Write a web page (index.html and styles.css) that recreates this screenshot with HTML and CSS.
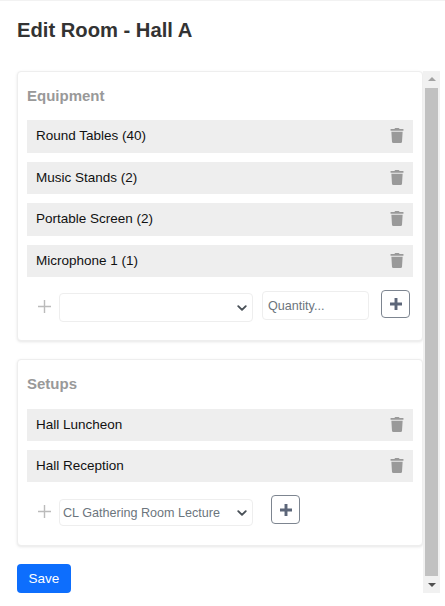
FILE: index.html
```html
<!DOCTYPE html>
<html lang="en">
<head>
  <meta charset="UTF-8">
  <meta name="viewport" content="width=device-width, initial-scale=1.0">
  <title>Edit Room - Hall A</title>
  <link rel="stylesheet" href="styles.css">
</head>
<body>
  <svg class="icon-defs" width="0" height="0">
    <symbol id="trash" viewBox="0 0 448 512">
      <path d="M432 32H312l-9.4-18.7A24 24 0 0 0 281.100 0H166.800a23.700 23.700 0 0 0-21.400 13.300L136 32H16A16 16 0 0 0 0 48v32a16 16 0 0 0 16 16h416a16 16 0 0 0 16-16V48a16 16 0 0 0-16-16zM53.200 467a48 48 0 0 0 47.900 45h245.800a48 48 0 0 0 47.900-45L416 128H32z"/>
    </symbol>
    <symbol id="plus" viewBox="0 0 14 14">
      <path d="M5.300 0h3.400v5.300H14v3.400H8.700V14H5.300V8.700H0V5.300h5.300z"/>
    </symbol>
    <symbol id="plus-thin" viewBox="0 0 13 13">
      <path d="M5.800 0h1.400v5.800H13v1.400H7.200V13H5.800V7.200H0V5.800h5.800z"/>
    </symbol>
  </svg>

  <div class="page">
    <h1>Edit Room - Hall A</h1>

    <div class="scroller">
      <div class="content">
        <section class="card">
          <h2>Equipment</h2>
          <ul class="items">
            <li><span>Round Tables (40)</span><svg class="trash"><use href="#trash"/></svg></li>
            <li><span>Music Stands (2)</span><svg class="trash"><use href="#trash"/></svg></li>
            <li><span>Portable Screen (2)</span><svg class="trash"><use href="#trash"/></svg></li>
            <li><span>Microphone 1 (1)</span><svg class="trash"><use href="#trash"/></svg></li>
          </ul>
          <form class="add-row">
            <svg class="add-mark"><use href="#plus-thin"/></svg>
            <select class="picker">
              <option></option>
            </select>
            <input class="qty" type="text" placeholder="Quantity...">
            <button class="add-btn" type="button"><svg class="plus"><use href="#plus"/></svg></button>
          </form>
        </section>

        <section class="card card-setups">
          <h2>Setups</h2>
          <ul class="items">
            <li><span>Hall Luncheon</span><svg class="trash"><use href="#trash"/></svg></li>
            <li><span>Hall Reception</span><svg class="trash"><use href="#trash"/></svg></li>
          </ul>
          <form class="add-row add-row-setup">
            <svg class="add-mark"><use href="#plus-thin"/></svg>
            <select class="picker">
              <option>CL Gathering Room Lecture</option>
            </select>
            <button class="add-btn" type="button"><svg class="plus"><use href="#plus"/></svg></button>
          </form>
        </section>

        <button class="save" type="button">Save</button>
      </div>

      <div class="scrollbar">
        <span class="arrow arrow-up"></span>
        <span class="thumb"></span>
        <span class="arrow arrow-down"></span>
      </div>
    </div>
  </div>
</body>
</html>
```
FILE: styles.css
```css
* {
  box-sizing: border-box;
}

body {
  font-family: "Liberation Sans", Arial, sans-serif;
  font-size: 13.500px;
  color: #212529;
  background: white;
  margin: 0;
  padding: 0;
}

.icon-defs {
  display: block;
  height: 0;
}

.page {
  border-top: 1px solid #f2f2f2;
  padding: 0 5px 0 17px;
}

h1 {
  font-size: 20.200px;
  font-weight: bold;
  line-height: 24px;
  color: #333;
  margin: 17px 0 29px;
}

.scroller {
  display: flex;
  height: 522px;
}

.content {
  flex: 1;
  min-width: 0;
}

.card {
  background: white;
  border: 1px solid #eee;
  border-radius: 4px;
  box-shadow: 0 1px 3px rgba(0, 0, 0, 0.1);
  padding: 0 9px;
  height: 270px;
}

.card-setups {
  margin-top: 18px;
  height: 187px;
}

h2 {
  font-size: 15px;
  font-weight: bold;
  line-height: 20px;
  color: #999;
  margin: 14px 0 14px;
}

.card-setups h2 {
  margin-bottom: 15px;
}

.items {
  list-style: none;
  margin: 0;
  padding: 0;
}

.items li {
  display: flex;
  align-items: center;
  justify-content: space-between;
  height: 32.500px;
  margin-bottom: 9px;
  padding: 0 9px 1px;
  background: #eee;
  color: #111;
}

.card-setups .items li {
  height: 32px;
}

.trash {
  width: 14px;
  height: 15px;
  fill: #999;
}

.add-row {
  display: flex;
  align-items: flex-start;
  margin-top: 13px;
  padding-left: 11px;
}

.add-mark {
  flex: none;
  width: 13px;
  height: 13px;
  margin: 10px 8px 0 0;
  fill: #bbb;
}

.picker {
  appearance: none;
  width: 194px;
  height: 29px;
  margin-top: 3px;
  padding: 0 3px;
  font-family: inherit;
  font-size: 12.600px;
  color: #6c757d;
  background: white url("data:image/svg+xml,%3Csvg xmlns='http://www.w3.org/2000/svg' viewBox='0 0 16 16'%3E%3Cpath fill='none' stroke='%23495057' stroke-width='3' stroke-linecap='round' stroke-linejoin='round' d='M2 5l6 6 6-6'/%3E%3C/svg%3E") no-repeat right 5px center / 10px 10px;
  border: 1px solid #eee;
  border-radius: 4px;
}

.add-row-setup .picker {
  height: 27px;
  margin-top: 4px;
}

.qty {
  width: 107px;
  height: 29px;
  margin: 1px 0 0 9px;
  padding: 0 5px;
  font-family: inherit;
  font-size: 12.600px;
  border: 1px solid #eee;
  border-radius: 4px;
}

.qty::placeholder {
  color: #6c757d;
}

.add-btn {
  display: flex;
  align-items: center;
  justify-content: center;
  width: 29px;
  height: 28px;
  margin-left: 12px;
  padding: 0;
  background: white;
  border: 1px solid #7d8590;
  border-radius: 4px;
}

.add-row-setup .add-btn {
  height: 29px;
  margin-left: 18px;
}

.plus {
  width: 12px;
  height: 12px;
  fill: #5c6679;
}

.save {
  display: block;
  width: 54px;
  height: 29px;
  margin-top: 18px;
  padding: 0;
  font-family: inherit;
  font-size: 13.500px;
  color: white;
  background: #0d6efd;
  border: none;
  border-radius: 4px;
}

.scrollbar {
  display: flex;
  flex-direction: column;
  align-items: center;
  flex: none;
  width: 17px;
  background: #f1f1f1;
}

.thumb {
  flex: 1;
  width: 13px;
  background: #c1c1c1;
}

.arrow {
  flex: none;
  width: 0;
  height: 0;
  border-left: 4px solid transparent;
  border-right: 4px solid transparent;
}

.arrow-up {
  margin: 6px 0 7px;
  border-bottom: 4px solid #a3a3a3;
}

.arrow-down {
  margin: 7px 0 6px;
  border-top: 4px solid #505050;
}
```
